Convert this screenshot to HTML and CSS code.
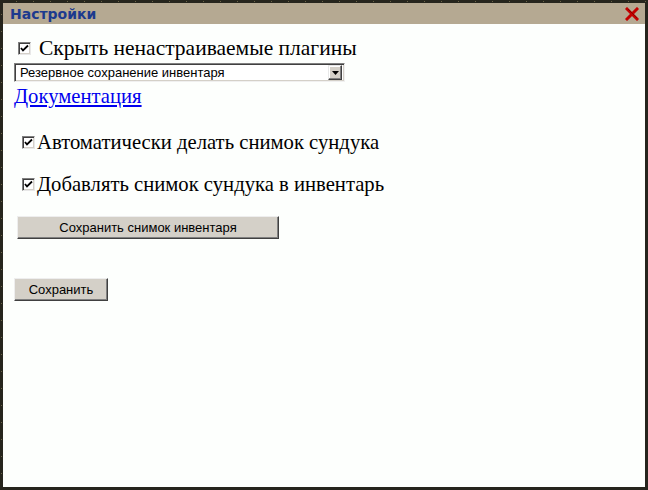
FILE: index.html
```html
<!DOCTYPE html>
<html lang="ru">
<head>
<meta charset="utf-8">
<title>Настройки</title>
<link rel="stylesheet" href="styles.css">
</head>
<body>
<div class="window">
  <div class="panel">
    <div class="titlebar">
      <span class="title">Настройки</span>
      <svg class="close" width="14" height="14" viewBox="0 0 14 14" aria-label="Закрыть">
        <path d="M2 2 L12 12 M12 2 L2 12" stroke="#c40000" stroke-width="3" stroke-linecap="square" fill="none"/>
        <path d="M3 2 L12 11" stroke="#8a0000" stroke-width="1" fill="none"/>
      </svg>
    </div>
    <div class="content">
      <label class="row row-main">
        <span class="check"><svg width="9" height="9" viewBox="0 0 9 9"><path d="M1 4 L3 6.5 L8 1.5" stroke="#000" stroke-width="1.8" fill="none"/></svg></span>
        <span class="big big-main">Скрыть ненастраиваемые плагины</span>
      </label>
      <div class="select">
        <span class="select-text">Резервное сохранение инвентаря</span>
        <span class="select-btn"><svg width="7" height="4" viewBox="0 0 7 4"><path d="M0 0 H7 L3.5 4 Z" fill="#000"/></svg></span>
      </div>
      <a class="doc big" href="#">Документация</a>
      <label class="row row-opt">
        <span class="check"><svg width="9" height="9" viewBox="0 0 9 9"><path d="M1 4 L3 6.5 L8 1.5" stroke="#000" stroke-width="1.8" fill="none"/></svg></span>
        <span class="big">Автоматически делать снимок сундука</span>
      </label>
      <label class="row row-opt row-opt2">
        <span class="check"><svg width="9" height="9" viewBox="0 0 9 9"><path d="M1 4 L3 6.5 L8 1.5" stroke="#000" stroke-width="1.8" fill="none"/></svg></span>
        <span class="big">Добавлять снимок сундука в инвентарь</span>
      </label>
      <button class="btn btn-snap" type="button">Сохранить снимок инвентаря</button>
      <button class="btn btn-save" type="button">Сохранить</button>
    </div>
  </div>
</div>
</body>
</html>
```
FILE: styles.css
```css
html, body {
  margin: 0;
  padding: 0;
  background: #fdfffd;
}

.window {
  width: 648px;
  height: 490px;
  box-sizing: border-box;
  padding: 3px;
  background-color: #26251d;
  background-image:
    repeating-linear-gradient(90deg, transparent 0 16px, #6b6448 16px 17px),
    repeating-linear-gradient(0deg, transparent 0 16px, #6b6448 16px 17px);
  background-size: 100% 1px, 1px 100%;
  background-repeat: no-repeat;
  background-position: 0 1px, 1px 0;
}

.panel {
  height: 100%;
  background: #fdfffd;
  display: flex;
  flex-direction: column;
}

.titlebar {
  height: 21px;
  background: #b5a992;
  display: flex;
  align-items: center;
  justify-content: space-between;
  padding: 0 6px 0 7px;
}

.title {
  font-family: "DejaVu Sans", Verdana, sans-serif;
  font-weight: bold;
  font-size: 14px;
  color: #1c3a8e;
}

.close {
  display: block;
  margin-top: 1px;
}

.content {
  display: flex;
  flex-direction: column;
  align-items: flex-start;
}

.big {
  font-family: "Liberation Serif", "Times New Roman", serif;
  font-size: 20.67px;
  color: #000;
  line-height: 24px;
}

.big-main {
  font-size: 21.5px;
}

.row {
  display: flex;
  align-items: center;
  height: 24px;
}

.check {
  box-sizing: border-box;
  width: 13px;
  height: 13px;
  background: #fff;
  border-top: 1px solid #808080;
  border-left: 1px solid #808080;
  border-right: 1px solid #e8e8e8;
  border-bottom: 1px solid #e8e8e8;
  box-shadow: inset 1px 1px 0 #404040, inset -1px -1px 0 #d4d0c8;
  display: flex;
  align-items: center;
  justify-content: center;
}

.row-main {
  margin-top: 12px;
  margin-left: 15px;
}

.row-main .check {
  margin-right: 8px;
}

.select {
  margin-top: 3px;
  margin-left: 11px;
  width: 331px;
  height: 19px;
  box-sizing: border-box;
  background: #fff;
  border-top: 1px solid #808080;
  border-left: 1px solid #808080;
  border-right: 1px solid #f0f0f0;
  border-bottom: 1px solid #f0f0f0;
  box-shadow: inset 1px 1px 0 #404040, inset -1px -1px 0 #d4d0c8;
  display: flex;
  align-items: center;
  justify-content: space-between;
  padding: 2px;
}

.select-text {
  font-family: "Liberation Sans", Arial, sans-serif;
  font-size: 13px;
  color: #000;
  padding-left: 3px;
}

.select-btn {
  width: 14px;
  height: 15px;
  box-sizing: border-box;
  background: #d4d0c8;
  border-top: 1px solid #e8e8e8;
  border-left: 1px solid #e8e8e8;
  border-right: 1px solid #404040;
  border-bottom: 1px solid #404040;
  box-shadow: inset -1px -1px 0 #808080, inset 1px 1px 0 #ffffff;
  display: flex;
  align-items: center;
  justify-content: center;
}

.doc {
  margin-top: 2px;
  margin-left: 11px;
  color: #0000ee;
  text-decoration: underline;
}

.row-opt {
  margin-top: 22px;
  margin-left: 19px;
}

.row-opt .check {
  margin-right: 2px;
}

.row-opt2 {
  margin-top: 18px;
}

.btn {
  font-family: "Liberation Sans", Arial, sans-serif;
  font-size: 13px;
  color: #000;
  background: #d4d0c8;
  border-top: 1px solid #eeeeee;
  border-left: 1px solid #eeeeee;
  border-right: 1px solid #404040;
  border-bottom: 1px solid #404040;
  box-shadow: inset -1px -1px 0 #808080;
  padding: 0;
  height: 23px;
  box-sizing: border-box;
}

.btn-snap {
  margin-top: 20px;
  margin-left: 14px;
  width: 262px;
}

.btn-save {
  margin-top: 39px;
  margin-left: 11px;
  width: 94px;
}
```
